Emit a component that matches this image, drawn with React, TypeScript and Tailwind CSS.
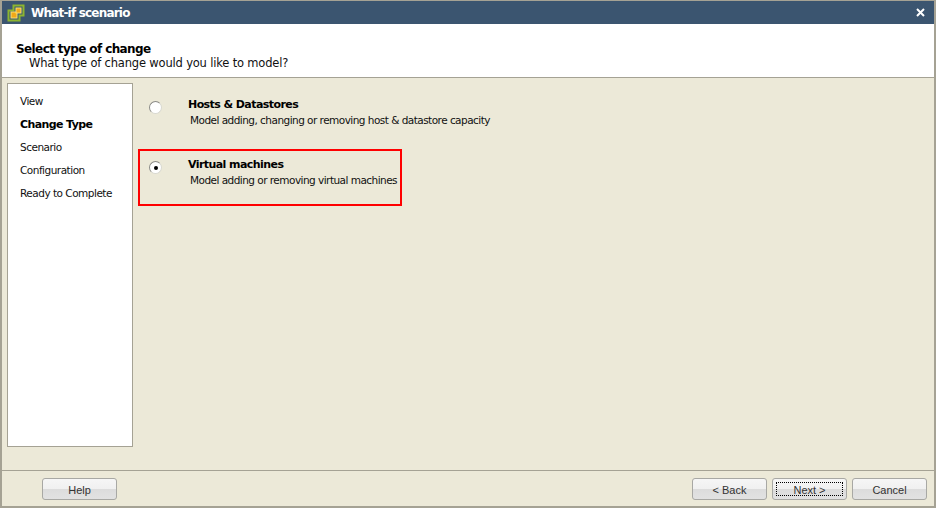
import React from "react";

const font = { fontFamily: '"DejaVu Sans", sans-serif' };

function AppIcon() {
  return (
    <svg width="18" height="18" viewBox="0 0 18 18" className="shrink-0">
      <path d="M6.5 1.5h10v10h-4v5h-11v-10h5z" fill="#3b5570" stroke="#8db52f" strokeWidth="2" />
      <rect x="4" y="8" width="6" height="6" fill="#f0a818" stroke="#f8e070" strokeWidth="1" />
      <rect x="9" y="4" width="5" height="5" fill="#f0a818" stroke="#f8e070" strokeWidth="1" />
    </svg>
  );
}

function Radio({ checked }: { checked?: boolean }) {
  return (
    <span className="relative mt-[1px] block h-[13px] w-[13px] shrink-0 rounded-full border border-[#8a8a86] border-r-[#d8d8d0] border-b-[#d8d8d0] bg-white">
      {checked && <span className="absolute left-[3.5px] top-[3.5px] h-1 w-1 rounded-full bg-black" />}
    </span>
  );
}

function WizButton({ label, focus }: { label: string; focus?: boolean }) {
  return (
    <button
      className="relative h-[22px] w-[75px] rounded-[3px] border border-[#a8a8a4] bg-[linear-gradient(#f6f6f6_0%,#f0f0f0_50%,#dcdcdc_50%,#e2e2e2_100%)] pt-[2px] text-[11px] text-[#333]"
      style={{ fontFamily: '"Liberation Sans", sans-serif' }}
    >
      {focus && <span className="absolute inset-[3px] border border-dotted border-black" />}
      <span className="relative">{label}</span>
    </button>
  );
}

function ChangeOption({ title, desc, checked }: { title: string; desc: string; checked?: boolean }) {
  return (
    <div className="flex items-start">
      <Radio checked={checked} />
      <div className="ml-[26px] mt-[-3px] whitespace-nowrap">
        <div className="text-[11px] leading-[15px] font-bold tracking-[-0.57px] text-black">{title}</div>
        <div className="ml-[2px] text-[10.5px] leading-[16px] tracking-[-0.53px] text-[#111]">{desc}</div>
      </div>
    </div>
  );
}

export default function App() {
  return (
    <div className="flex h-[508px] w-[936px] flex-col overflow-hidden bg-[#ece9d8] border-l-[2px] border-r-[2px] border-b-[2px] border-t border-[#a5a294]" style={font}>
      {/* title bar */}
      <div className="flex h-[23px] shrink-0 items-center bg-[#3b5570] pl-[5px] pr-[9px]">
        <AppIcon />
        <span className="ml-[6px] flex-1 text-[12px] font-bold tracking-[-0.8px] text-white">What-if scenario</span>
        <svg width="9" height="9" viewBox="0 0 9 9">
          <path d="M1 1l7 7M8 1l-7 7" stroke="#fff" strokeWidth="2" />
        </svg>
      </div>

      {/* header */}
      <div className="h-[54px] shrink-0 border-b border-[#a5a294] bg-white pl-[14px] pt-[18px]">
        <div className="text-[12px] leading-[14px] font-bold tracking-[-0.6px] text-black">Select type of change</div>
        <div className="ml-[13px] text-[11.5px] leading-[14px] tracking-[-0.18px] text-[#111]">What type of change would you like to model?</div>
      </div>

      {/* body */}
      <div className="flex min-h-0 flex-1 pl-[5px] pt-[5px]">
        <div className="mb-[23px] flex w-[126px] shrink-0 flex-col border border-[#a5a294] bg-white pl-[12px] pt-[9px] text-[10.5px] leading-[16px] tracking-[-0.5px] text-[#111]">
          <div className="mb-[8px]">View</div>
          <div className="mb-[6px] text-[11px] font-bold tracking-[-0.6px] text-black">Change Type</div>
          <div className="mb-[7px]">Scenario</div>
          <div className="mb-[7px]">Configuration</div>
          <div>Ready to Complete</div>
        </div>
        <div className="flex-1 pl-[5px] pt-[17px]">
          <div className="pl-[11px]">
            <ChangeOption title="Hosts & Datastores" desc="Model adding, changing or removing host & datastore capacity" />
          </div>
          <div className="mt-[21px] h-[57px] w-[264px] border-[2px] border-[#ff0000] pl-[9px] pt-[9px]">
            <ChangeOption checked title="Virtual machines" desc="Model adding or removing virtual machines" />
          </div>
        </div>
      </div>

      {/* footer */}
      <div className="flex h-[36px] shrink-0 items-start border-t border-[#a5a294] pl-[40px] pr-[7px] pt-[7px]">
        <WizButton label="Help" />
        <div className="flex-1" />
        <div className="flex gap-[5px]">
          <WizButton label="< Back" />
          <WizButton label="Next >" focus />
          <WizButton label="Cancel" />
        </div>
      </div>
    </div>
  );
}
